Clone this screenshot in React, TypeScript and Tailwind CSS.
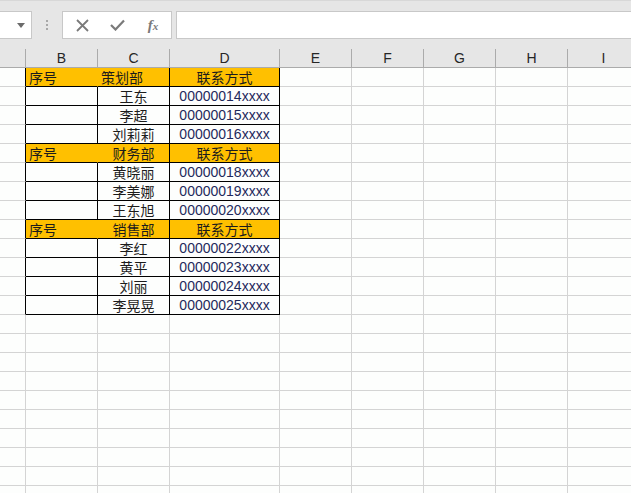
import React from 'react';

type Row =
  | { kind: 'head'; b: string; c: string; d: string; cLeft?: boolean }
  | { kind: 'data'; c: string; d: string };

const ROWS: Row[] = [
  { kind: 'head', b: '序号', c: '策划部', d: '联系方式', cLeft: true },
  { kind: 'data', c: '王东', d: '00000014xxxx' },
  { kind: 'data', c: '李超', d: '00000015xxxx' },
  { kind: 'data', c: '刘莉莉', d: '00000016xxxx' },
  { kind: 'head', b: '序号', c: '财务部', d: '联系方式' },
  { kind: 'data', c: '黄晓丽', d: '00000018xxxx' },
  { kind: 'data', c: '李美娜', d: '00000019xxxx' },
  { kind: 'data', c: '王东旭', d: '00000020xxxx' },
  { kind: 'head', b: '序号', c: '销售部', d: '联系方式' },
  { kind: 'data', c: '李红', d: '00000022xxxx' },
  { kind: 'data', c: '黄平', d: '00000023xxxx' },
  { kind: 'data', c: '刘丽', d: '00000024xxxx' },
  { kind: 'data', c: '李晃晃', d: '00000025xxxx' },
];

const COLS = ['B', 'C', 'D', 'E', 'F', 'G', 'H', 'I'];
const EMPTY_ROWS = 10;

const cjk = "font-['Noto_Sans_CJK_SC',sans-serif]";
const num = "font-['Liberation_Sans','Noto_Sans_CJK_SC',sans-serif]";

const FormulaBar = () => (
  <div className="h-[48px] bg-[#e6e6e6] border-t border-[#d8d8d8]">
    <div className="flex items-center h-[38px] pt-[10px]">
      {/* name box */}
      <div className="w-[32px] h-[28px] bg-white border border-l-0 border-[#c8c8c8] flex items-center justify-end pr-[6px]">
        <svg width="8" height="5" viewBox="0 0 8 5">
          <path d="M0 0 L8 0 L4 5 Z" fill="#6b6b6b" />
        </svg>
      </div>
      {/* splitter dots */}
      <div className="w-[30px] flex flex-col items-center gap-[2px]">
        <span className="w-[2px] h-[2px] bg-[#a8a8a8]" />
        <span className="w-[2px] h-[2px] bg-[#a8a8a8]" />
        <span className="w-[2px] h-[2px] bg-[#a8a8a8]" />
      </div>
      {/* buttons */}
      <div className="w-[110px] h-[28px] bg-white border border-[#c8c8c8] flex items-center">
        <div className="w-[36px] flex justify-center pl-[2px]">
          <svg width="13" height="13" viewBox="0 0 13 13">
            <path d="M1 1 L12 12 M12 1 L1 12" stroke="#7a7a7a" strokeWidth="1.8" />
          </svg>
        </div>
        <div className="w-[36px] flex justify-center">
          <svg width="15" height="12" viewBox="0 0 15 12">
            <path d="M1 6 L5.5 10.5 L14 1.5" stroke="#7a7a7a" strokeWidth="2.2" fill="none" />
          </svg>
        </div>
        <div className="w-[36px] flex justify-center">
          <span className="font-['Liberation_Serif',serif] italic font-bold text-[15px] text-[#7a7a7a] leading-none">
            f<span className="text-[11px]">x</span>
          </span>
        </div>
      </div>
      <div className="w-[4px]" />
      <div className="flex-1 h-[28px] bg-white border border-r-0 border-[#c8c8c8]" />
    </div>
  </div>
);

const ColumnHeader = () => (
  <div className="flex h-[20px] bg-[#e6e6e6] border-b border-[#ababab]">
    <div className="w-[26px] shrink-0 border-r border-[#ababab] mt-[1px]" />
    {COLS.map((c) => (
      <div
        key={c}
        className={`${c === 'D' ? 'w-[110px]' : 'w-[72px]'} shrink-0 border-r border-[#ababab] mt-[1px] flex items-end justify-center ${num} text-[14px] leading-[17px] text-[#262626]`}
      >
        {c}
      </div>
    ))}
    <div className="flex-1" />
  </div>
);

const Cell = ({
  w,
  fill,
  border,
  align,
  children,
  font,
}: {
  w: string;
  fill?: boolean;
  border: string;
  align?: string;
  children?: React.ReactNode;
  font?: string;
}) => (
  <div
    className={`${w} shrink-0 border-r border-b ${border} ${fill ? 'bg-[#ffc000]' : 'bg-[#fdfefd]'} flex items-end ${align ?? 'justify-center'} ${font ?? cjk} text-[14px] leading-[18px] text-[#1c1c1c] whitespace-nowrap overflow-hidden`}
  >
    {children}
  </div>
);

const Grid = () => (
  <div className="flex flex-col">
    {ROWS.map((r, i) => {
      const head = r.kind === 'head';
      return (
        <div key={i} className="flex h-[19px]">
          <Cell w="w-[26px]" border="border-r-black border-[#d4d4d4]" />
          <Cell
            w="w-[72px]"
            fill={head}
            border={head ? 'border-r-[#ffc000] border-b-black' : 'border-r-black border-b-black'}
            align="justify-start pl-[3px]"
          >
            {head ? r.b : ''}
          </Cell>
          <Cell
            w="w-[72px]"
            fill={head}
            border="border-r-black border-b-black"
            align={head && r.cLeft ? 'justify-start pl-[3px]' : 'justify-center'}
          >
            {r.c}
          </Cell>
          <Cell w="w-[110px]" fill={head} border="border-r-black border-b-black" font={head ? cjk : num}>
            {head ? r.d : <span className="text-[#1f2a5c]">{r.d}</span>}
          </Cell>
          {[0, 1, 2, 3, 4].map((k) => (
            <Cell key={k} w="w-[72px]" border="border-[#d4d4d4]" />
          ))}
          <div className="flex-1 border-b border-[#d4d4d4] bg-[#fdfefd]" />
        </div>
      );
    })}
    {Array.from({ length: EMPTY_ROWS }).map((_, i) => (
      <div key={`e${i}`} className="flex h-[19px]">
        <Cell w="w-[26px]" border="border-[#d4d4d4]" />
        <Cell w="w-[72px]" border="border-[#d4d4d4]" />
        <Cell w="w-[72px]" border="border-[#d4d4d4]" />
        <Cell w="w-[110px]" border="border-[#d4d4d4]" />
        {[0, 1, 2, 3, 4].map((k) => (
          <Cell key={k} w="w-[72px]" border="border-[#d4d4d4]" />
        ))}
        <div className="flex-1 border-b border-[#d4d4d4] bg-[#fdfefd]" />
      </div>
    ))}
  </div>
);

export default function App() {
  return (
    <div className="w-[631px] h-[493px] overflow-hidden bg-[#fdfefd]">
      <FormulaBar />
      <ColumnHeader />
      <Grid />
    </div>
  );
}
